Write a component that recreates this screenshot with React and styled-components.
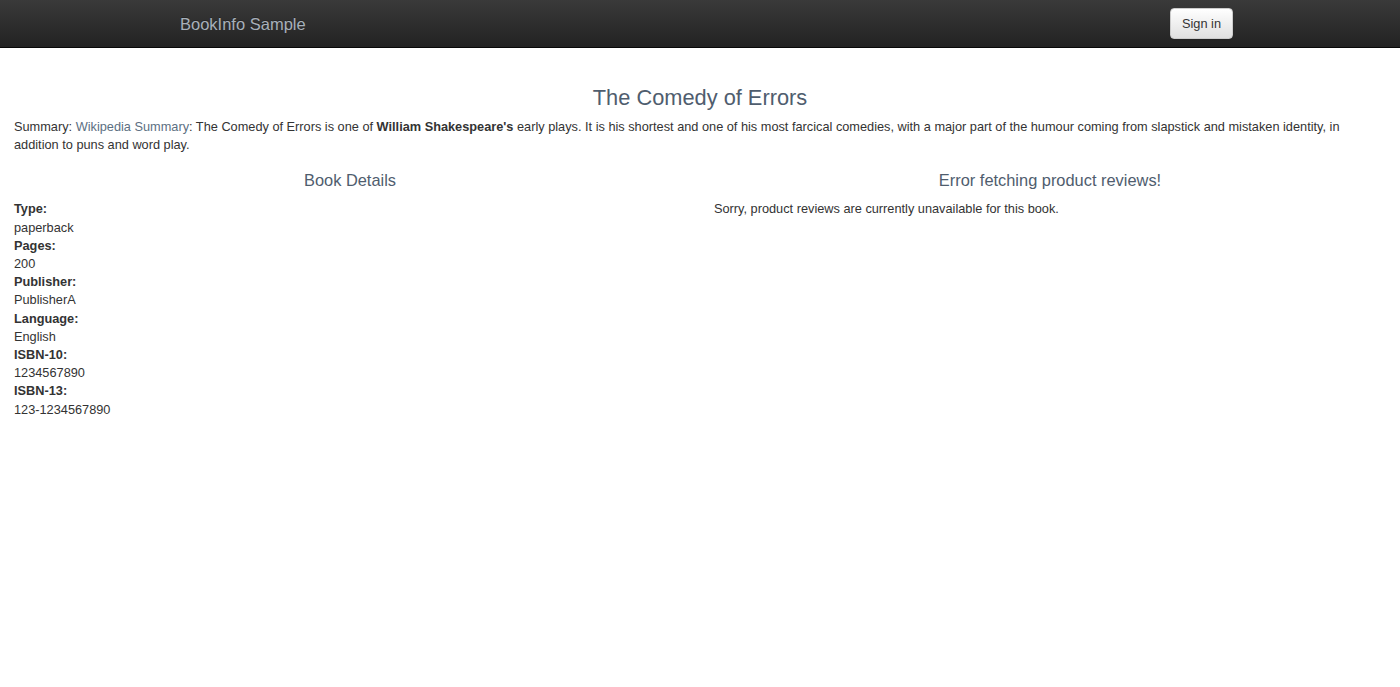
import React from "react";
import styled, { createGlobalStyle } from "styled-components";

const Global = createGlobalStyle`
  html, body { margin: 0; padding: 0; background: #fff; }
  body {
    font-family: "Liberation Sans", Arial, sans-serif;
    font-size: 12.75px;
    line-height: 18.2px;
    color: #333;
  }
`;

const Navbar = styled.nav`
  height: 48px;
  background: linear-gradient(to bottom, #3a3a3a 0%, #222 100%);
  border-bottom: 1px solid #080808;
  box-sizing: border-box;
`;

const NavInner = styled.div`
  width: 1070px;
  margin: 0 auto;
  height: 100%;
  display: flex;
  align-items: center;
  justify-content: space-between;
`;

const Brand = styled.a`
  color: #a7b0ba;
  font-size: 16.5px;
  padding: 2px 15px 0;
  text-decoration: none;
  text-shadow: 0 -1px 0 rgba(0, 0, 0, 0.25);
`;

const SignIn = styled.button`
  font-family: "Liberation Sans", Arial, sans-serif;
  font-size: 12.75px;
  color: #333;
  height: 31px;
  padding: 0 11px;
  margin-right: 2px;
  border: 1px solid #ccc;
  border-radius: 4px;
  background: linear-gradient(to bottom, #fff 0%, #e0e0e0 100%);
  box-shadow: inset 0 1px 0 rgba(255, 255, 255, 0.15), 0 1px 1px rgba(0, 0, 0, 0.075);
`;

const Main = styled.main`
  padding: 0 14px;
`;

const Title = styled.h3`
  text-align: center;
  font-weight: normal;
  font-size: 21.8px;
  line-height: 26px;
  color: #4f5d6e;
  margin: 37px 0 7px;
`;

const Summary = styled.p`
  margin: 0;
  padding-right: 18px;
`;

const Link = styled.a`
  color: #5c6f82;
  text-decoration: none;
`;

const Row = styled.div`
  display: grid;
  grid-template-columns: 1fr 1fr;
  column-gap: 28px;
  margin-top: 16px;
`;

const SubTitle = styled.h4`
  text-align: center;
  font-weight: normal;
  font-size: 16.4px;
  line-height: 20px;
  color: #4f5d6e;
  margin: 0 0 10px;
`;

const Dl = styled.dl`
  margin: 0;
`;

const Dt = styled.dt`
  font-weight: bold;
`;

const Dd = styled.dd`
  margin: 0;
`;

const Text = styled.p`
  margin: 0;
`;

const details = [
  ["Type:", "paperback"],
  ["Pages:", "200"],
  ["Publisher:", "PublisherA"],
  ["Language:", "English"],
  ["ISBN-10:", "1234567890"],
  ["ISBN-13:", "123-1234567890"],
];

export default function App() {
  return (
    <>
      <Global />
      <Navbar>
        <NavInner>
          <Brand href="#">BookInfo Sample</Brand>
          <SignIn type="button">Sign in</SignIn>
        </NavInner>
      </Navbar>
      <Main>
        <Title>The Comedy of Errors</Title>
        <Summary>
          Summary: <Link href="#">Wikipedia Summary</Link>: The Comedy of Errors is one of{" "}
          <b>William Shakespeare's</b> early plays. It is his shortest and one of his most farcical
          comedies, with a major part of the humour coming from slapstick and mistaken identity, in
          addition to puns and word play.
        </Summary>
        <Row>
          <div>
            <SubTitle>Book Details</SubTitle>
            <Dl>
              {details.map(([k, v]) => (
                <React.Fragment key={k}>
                  <Dt>{k}</Dt>
                  <Dd>{v}</Dd>
                </React.Fragment>
              ))}
            </Dl>
          </div>
          <div>
            <SubTitle>Error fetching product reviews!</SubTitle>
            <Text>Sorry, product reviews are currently unavailable for this book.</Text>
          </div>
        </Row>
      </Main>
    </>
  );
}
